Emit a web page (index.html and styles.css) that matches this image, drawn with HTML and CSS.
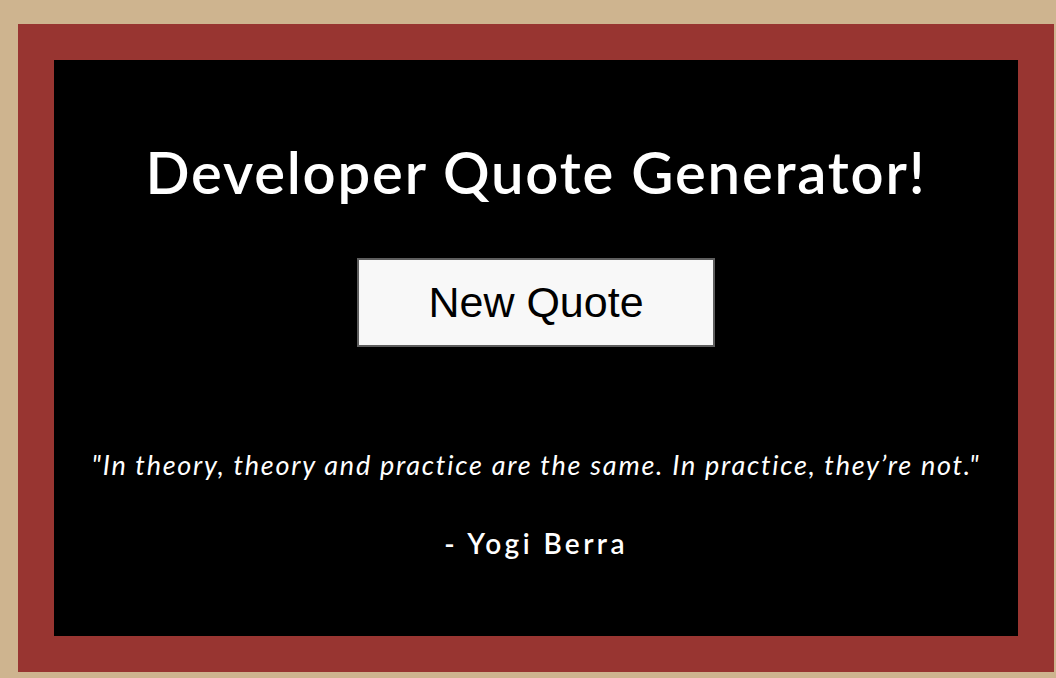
FILE: index.html
```html
<!DOCTYPE html>
<html>
<head>
<meta charset="utf-8">
<link rel="stylesheet" href="styles.css">
</head>
<body>
<div class="frame">
  <div class="board">
    <h1 class="title">Developer Quote Generator!</h1>
    <button class="btn">New Quote</button>
    <p class="quote">"In theory, theory and practice are the same. In practice, they’re not."</p>
    <p class="author">- Yogi Berra</p>
  </div>
</div>
</body>
</html>
```
FILE: styles.css
```css
html, body {
  margin: 0;
  padding: 0;
  background: #ceb48f;
}
body {
  padding: 24px 2px 6px 18px;
  font-family: Lato, "Open Sans", sans-serif;
}
.frame {
  background: #983531;
  padding: 36px;
}
.board {
  background: #000;
  height: 576px;
  display: flex;
  flex-direction: column;
  align-items: center;
  color: #fff;
  box-sizing: border-box;
  padding-top: 76px;
}
.title {
  margin: 0;
  font-size: 58px;
  font-weight: 600;
  letter-spacing: 1.8px;
  line-height: 72px;
}
.btn {
  margin-top: 50px;
  width: 358px;
  height: 89px;
  background: #f8f8f8;
  border: 2px solid #5e5e5e;
  border-radius: 0;
  font-family: "Liberation Sans", Arial, sans-serif;
  font-size: 43px;
  color: #000;
  padding: 0;
}
.quote {
  margin: 100px 0 0;
  font-style: italic;
  font-size: 27px;
  letter-spacing: 1.75px;
  line-height: 36px;
}
.author {
  margin: 42px 0 0;
  font-weight: 600;
  font-size: 28px;
  letter-spacing: 3.4px;
  line-height: 36px;
}
```
